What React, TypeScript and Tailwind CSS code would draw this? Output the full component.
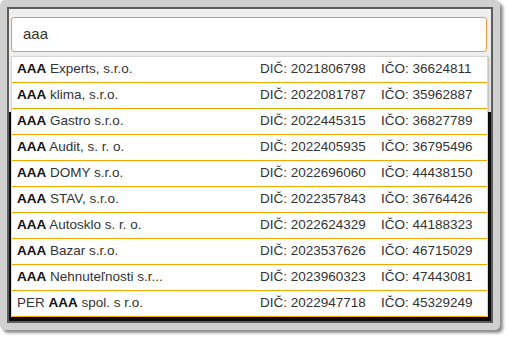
const rows: { pre?: string; rest: string; dic: string; ico: string }[] = [
  { rest: ' Experts, s.r.o.', dic: '2021806798', ico: '36624811' },
  { rest: ' klima, s.r.o.', dic: '2022081787', ico: '35962887' },
  { rest: ' Gastro s.r.o.', dic: '2022445315', ico: '36827789' },
  { rest: ' Audit, s. r. o.', dic: '2022405935', ico: '36795496' },
  { rest: ' DOMY s.r.o.', dic: '2022696060', ico: '44438150' },
  { rest: ' STAV, s.r.o.', dic: '2022357843', ico: '36764426' },
  { rest: ' Autosklo s. r. o.', dic: '2022624329', ico: '44188323' },
  { rest: ' Bazar s.r.o.', dic: '2023537626', ico: '46715029' },
  { rest: ' Nehnuteľnosti s.r...', dic: '2023960323', ico: '47443081' },
  { pre: 'PER ', rest: ' spol. s r.o.', dic: '2022947718', ico: '45329249' },
]

export default function App() {
  return (
    <div
      className="relative w-[507px] h-[338px] bg-white overflow-hidden"
      style={{ fontFamily: '"Liberation Sans", Arial, sans-serif' }}
    >
      <div className="w-[500px] h-[330px] rounded-[5px] bg-[#d0d0d0] p-[7px] shadow-[3px_3px_3px_rgba(0,0,0,0.45)]">
        <div className="relative flex h-full flex-col border-2 border-[#5c5c5c] bg-black">
          <div className="h-[103px] bg-[#efefef] px-[2px] pt-[8px]">
            <div className="flex h-[35px] w-[476px] items-center rounded-[3px] border border-[#f29a2e] bg-white pl-[11px] text-[15px] text-[#333]">
              aaa
            </div>
          </div>
          <div className="flex-1 bg-[#0b0b0b]" />

          <div className="absolute left-[2px] top-[47px] w-[477px] border border-[#d6d6d6] border-b-0 bg-white shadow-[1px_1px_2px_rgba(0,0,0,0.25)]">
            {rows.map((r, i) => (
              <div
                key={i}
                className="grid h-[26px] grid-cols-[243px_121px_1fr] items-center border-b border-[#f6a500] pl-[5px] text-[13.5px] text-[#333]"
              >
                <div className="whitespace-pre">
                  {r.pre}
                  <b className="text-[#111]">AAA</b>
                  {r.rest}
                </div>
                <div>DIČ: {r.dic}</div>
                <div>IČO: {r.ico}</div>
              </div>
            ))}
          </div>
        </div>
      </div>
    </div>
  )
}
